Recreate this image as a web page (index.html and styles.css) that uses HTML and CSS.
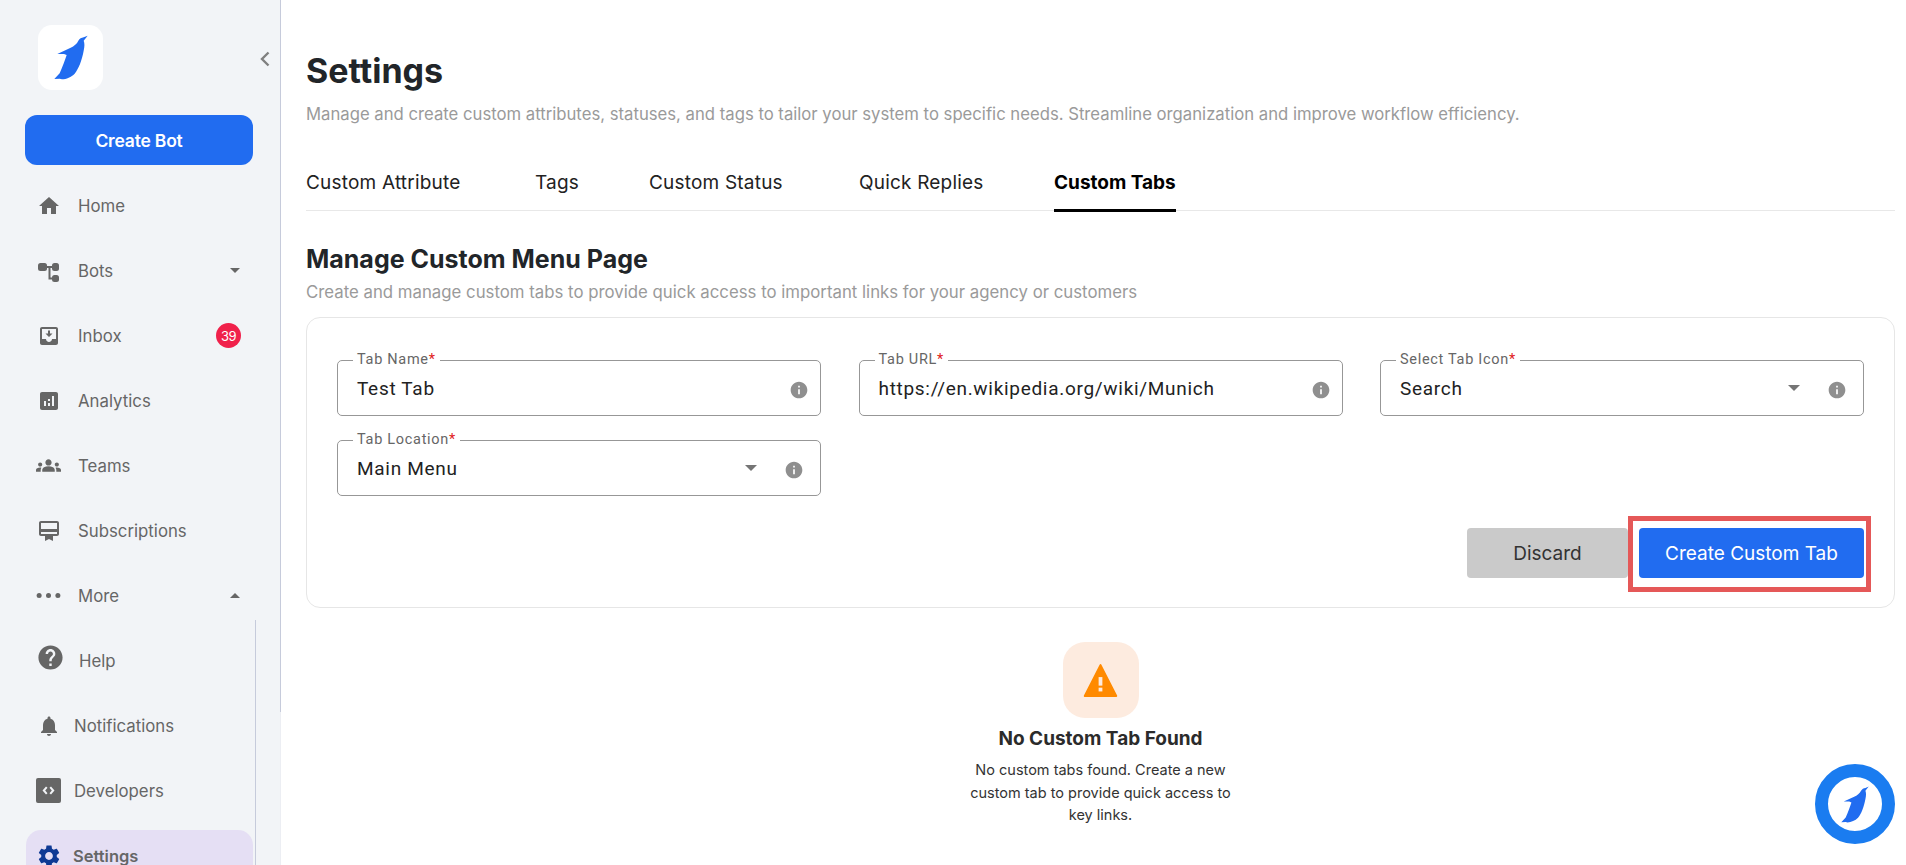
FILE: index.html
```html
<!DOCTYPE html>
<html lang="en">
<head>
    <meta charset="UTF-8">
    <meta name="viewport" content="width=device-width, initial-scale=1.0">
    <title>Settings</title>
    <link rel="stylesheet" href="styles.css">
</head>
<body>
    <svg class="defs" width="0" height="0">
        <symbol id="penguin" viewBox="100 75 102 135">
            <path d="M201 77 L189 82 C182 83 177 86 173 92 C169 101 160 108 150 113 L110 132 L130 132 L138 135 C133 150 126 170 117 190 L101 207 L117 206 L124 208 C137 208 152 201 162 191 C174 176 184 150 189 122 C192 108 192 100 189 92 Z"/>
        </symbol>
        <symbol id="info" viewBox="0 0 24 24">
            <path d="M12 2C6.48 2 2 6.48 2 12s4.48 10 10 10 10-4.48 10-10S17.52 2 12 2zm1 15h-2v-6h2v6zm0-8h-2V7h2v2z"/>
        </symbol>
    </svg>

    <div class="app">
        <aside class="sidebar">
            <div class="logo-row">
                <div class="logo"><svg class="logo-bird"><use href="#penguin"/></svg></div>
                <svg class="collapse" viewBox="0 0 12 18"><path d="M9.5 2.5 3 9l6.5 6.5"/></svg>
            </div>
            <button class="create-bot">Create Bot</button>
            <nav class="nav">
                <a class="nav-item">
                    <svg class="nav-icon" viewBox="0 0 24 24"><path d="M10 20v-6h4v6h5v-8h3L12 3 2 12h3v8z"/></svg>
                    <span class="nav-label">Home</span>
                </a>
                <a class="nav-item">
                    <svg class="nav-icon" viewBox="0 0 24 24"><rect x="1" y="4" width="9" height="8" rx="2.5"/><rect x="15" y="4" width="7" height="8" rx="2.5"/><rect x="15" y="16" width="7" height="7" rx="2.5"/><path d="M9 7h7v2h-2.500v9.500H16v2h-4.500V9H9z"/></svg>
                    <span class="nav-label">Bots</span>
                    <span class="caret"></span>
                </a>
                <a class="nav-item">
                    <svg class="nav-icon" viewBox="0 0 24 24"><path d="M19 3H5c-1.100 0-2 .9-2 2v14c0 1.100.9 2 2 2h14c1.100 0 2-.9 2-2V5c0-1.100-.9-2-2-2zm0 12h-4c0 1.660-1.350 3-3 3s-3-1.340-3-3H5V5h14v10z"/><path d="M15.500 9.500H13v-3h-2v3H8.500l3.500 3.500z"/></svg>
                    <span class="nav-label">Inbox</span>
                    <span class="badge">39</span>
                </a>
                <a class="nav-item">
                    <svg class="nav-icon" viewBox="0 0 24 24"><path d="M19 3H5c-1.100 0-2 .9-2 2v14c0 1.100.9 2 2 2h14c1.100 0 2-.9 2-2V5c0-1.100-.9-2-2-2zM9 17H7v-5h2v5zm4 0h-2v-3h2v3zm0-5h-2v-2h2v2zm4 5h-2V7h2v10z"/></svg>
                    <span class="nav-label">Analytics</span>
                </a>
                <a class="nav-item">
                    <svg class="nav-icon nav-icon-wide" viewBox="0 0 24 24"><path d="M12 12.750c1.630 0 3.070.39 4.240.9 1.080.48 1.760 1.560 1.760 2.730V18H6v-1.610c0-1.180.68-2.260 1.760-2.730 1.170-.52 2.610-.91 4.240-.91zM4 13c1.100 0 2-.9 2-2s-.9-2-2-2-2 .9-2 2 .9 2 2 2zm1.130 1.100c-.37-.06-.74-.1-1.130-.1-.99 0-1.930.21-2.780.58C.48 14.900 0 15.620 0 16.430V18h4.500v-1.610c0-.83.23-1.610.63-2.290zM20 13c1.100 0 2-.9 2-2s-.9-2-2-2-2 .9-2 2 .9 2 2 2zm4 3.430c0-.81-.48-1.530-1.220-1.850-.85-.37-1.790-.58-2.780-.58-.39 0-.76.04-1.130.1.4.68.63 1.460.63 2.290V18H24v-1.570zM12 6c1.660 0 3 1.340 3 3s-1.340 3-3 3-3-1.340-3-3 1.340-3 3-3z"/></svg>
                    <span class="nav-label">Teams</span>
                </a>
                <a class="nav-item">
                    <svg class="nav-icon" viewBox="0 0 24 24"><path d="M20 2H4C2.890 2 2 2.890 2 4v11c0 1.110.89 2 2 2h4v5l4-2 4 2v-5h4c1.110 0 2-.89 2-2V4c0-1.110-.89-2-2-2zm0 13H4v-2h16v2zm0-5H4V4h16v6z"/></svg>
                    <span class="nav-label">Subscriptions</span>
                </a>
                <a class="nav-item">
                    <svg class="nav-icon nav-icon-wide" viewBox="0 0 24 24"><circle cx="3" cy="12" r="2.400"/><circle cx="12" cy="12" r="2.400"/><circle cx="21" cy="12" r="2.400"/></svg>
                    <span class="nav-label">More</span>
                    <span class="caret caret-up"></span>
                </a>
                <div class="subnav">
                    <a class="nav-item">
                        <svg class="nav-icon nav-icon-help" viewBox="0 0 24 24"><path d="M12 2C6.480 2 2 6.480 2 12s4.480 10 10 10 10-4.480 10-10S17.520 2 12 2zm1 17h-2v-2h2v2zm2.070-7.750l-.9.92C13.450 12.900 13 13.500 13 15h-2v-.5c0-1.100.45-2.100 1.170-2.830l1.240-1.260c.37-.36.59-.86.59-1.410 0-1.100-.9-2-2-2s-2 .9-2 2H8c0-2.210 1.790-4 4-4s4 1.790 4 4c0 .88-.36 1.680-.93 2.250z"/></svg>
                        <span class="nav-label nav-label-help">Help</span>
                    </a>
                    <a class="nav-item nav-item-tight">
                        <svg class="nav-icon" viewBox="0 0 24 24"><path d="M12 22c1.100 0 2-.9 2-2h-4c0 1.100.89 2 2 2zm6-6v-5c0-3.070-1.640-5.640-4.500-6.320V4c0-.83-.67-1.500-1.500-1.500s-1.500.67-1.500 1.500v.68C7.630 5.360 6 7.920 6 11v5l-2 2v1h16v-1l-2-2z"/></svg>
                        <span class="nav-label">Notifications</span>
                    </a>
                    <a class="nav-item nav-item-tight">
                        <svg class="nav-icon nav-icon-wide" viewBox="0 0 25 25"><path fill-rule="evenodd" d="M2 0h21a2 2 0 0 1 2 2v21a2 2 0 0 1-2 2H2a2 2 0 0 1-2-2V2a2 2 0 0 1 2-2zm8 8.500L6.500 12.500l3.500 4 1.500-1.300-2.300-2.700 2.300-2.700zm5 0-1.500 1.300 2.300 2.700-2.300 2.700 1.500 1.300 3.500-4z"/></svg>
                        <span class="nav-label">Developers</span>
                    </a>
                    <a class="nav-item nav-item-tight nav-item-active">
                        <svg class="nav-icon" viewBox="0 0 24 24"><path d="M19.140 12.940c.04-.3.06-.61.06-.94 0-.32-.02-.64-.07-.94l2.030-1.580c.18-.14.23-.41.12-.61l-1.920-3.320c-.12-.22-.37-.29-.59-.22l-2.390.96c-.5-.38-1.030-.7-1.620-.94l-.36-2.540c-.04-.24-.24-.41-.48-.41h-3.840c-.24 0-.43.17-.47.41l-.36 2.540c-.59.24-1.130.57-1.620.94l-2.390-.96c-.22-.08-.47 0-.59.22L2.740 8.870c-.12.21-.08.47.12.61l2.030 1.580c-.05.3-.09.63-.09.94s.02.64.07.94l-2.030 1.580c-.18.14-.23.41-.12.61l1.920 3.320c.12.22.37.29.59.22l2.390-.96c.5.38 1.030.7 1.620.94l.36 2.540c.05.24.24.41.48.41h3.840c.24 0 .44-.17.47-.41l.36-2.540c.59-.24 1.130-.56 1.620-.94l2.390.96c.22.08.47 0 .59-.22l1.920-3.320c.12-.22.07-.47-.12-.61l-2.010-1.580zM12 15.600c-1.980 0-3.600-1.620-3.600-3.600s1.620-3.600 3.600-3.600 3.600 1.620 3.600 3.600-1.620 3.600-3.600 3.600z"/></svg>
                        <span class="nav-label">Settings</span>
                    </a>
                </div>
            </nav>
        </aside>

        <main class="main">
            <h1 class="page-title">Settings</h1>
            <p class="page-sub">Manage and create custom attributes, statuses, and tags to tailor your system to specific needs. Streamline organization and improve workflow efficiency.</p>

            <div class="tabs">
                <a class="tab tab-attr">Custom Attribute</a>
                <a class="tab tab-tags">Tags</a>
                <a class="tab tab-status">Custom Status</a>
                <a class="tab tab-replies">Quick Replies</a>
                <a class="tab tab-active">Custom Tabs</a>
            </div>

            <h2 class="section-title">Manage Custom Menu Page</h2>
            <p class="section-sub">Create and manage custom tabs to provide quick access to important links for your agency or customers</p>

            <section class="card">
                <div class="fields">
                    <fieldset class="field">
                        <legend class="field-label">Tab Name<span class="req">*</span></legend>
                        <span class="field-value">Test Tab</span>
                        <svg class="info"><use href="#info"/></svg>
                    </fieldset>
                    <fieldset class="field">
                        <legend class="field-label">Tab URL<span class="req">*</span></legend>
                        <span class="field-value">https://en.wikipedia.org/wiki/Munich</span>
                        <svg class="info"><use href="#info"/></svg>
                    </fieldset>
                    <fieldset class="field field-select">
                        <legend class="field-label">Select Tab Icon<span class="req">*</span></legend>
                        <span class="field-value">Search</span>
                        <span class="select-arrow"></span>
                        <svg class="info"><use href="#info"/></svg>
                    </fieldset>
                    <fieldset class="field field-select">
                        <legend class="field-label">Tab Location<span class="req">*</span></legend>
                        <span class="field-value">Main Menu</span>
                        <span class="select-arrow"></span>
                        <svg class="info"><use href="#info"/></svg>
                    </fieldset>
                </div>
                <div class="actions">
                    <button class="btn btn-discard">Discard</button>
                    <button class="btn btn-create">Create Custom Tab</button>
                    <span class="highlight"></span>
                </div>
            </section>

            <div class="empty">
                <div class="empty-icon">
                    <svg viewBox="0 0 24 24">
                        <path class="warn-shape" d="M2.800 21.100h18.400L12 3z"/>
                        <rect class="warn-mark" x="10.900" y="10" width="2.200" height="5"/>
                        <rect class="warn-mark" x="10.900" y="16.200" width="2.200" height="2.200"/>
                    </svg>
                </div>
                <h3 class="empty-title">No Custom Tab Found</h3>
                <p class="empty-text">No custom tabs found. Create a new custom tab to provide quick access to key links.</p>
            </div>
        </main>
    </div>

    <div class="chat-bubble"><svg class="chat-bird"><use href="#penguin"/></svg></div>
</body>
</html>
```

FILE: styles.css
```css
* {
    box-sizing: border-box;
}
html, body {
    margin: 0;
    height: 100%;
    overflow: hidden;
    background: white;
}
body {
    font-family: "Inter", "Liberation Sans", sans-serif;
    color: #212121;
}
.defs {
    position: absolute;
}
.app {
    display: flex;
    height: 865px;
    overflow: hidden;
}

/* sidebar */
.sidebar {
    width: 281px;
    flex-shrink: 0;
    height: 865px;
    overflow: hidden;
    background: #f2f4f7;
    border-right: 1px solid #c6cbdb;
    border-image: linear-gradient(#c6cbdb 711px, #eceef3 711px) 1;
    padding: 25px 27px 0 25px;
}
.logo-row {
    display: flex;
    align-items: center;
    justify-content: space-between;
    padding-left: 13px;
    margin-right: -18px;
}
.logo {
    width: 65px;
    height: 65px;
    background: white;
    border-radius: 14px;
    display: flex;
    align-items: center;
    justify-content: center;
}
.logo-bird {
    width: 34px;
    height: 45px;
    fill: #216cf0;
}
.collapse {
    width: 12px;
    height: 18px;
    margin-top: 3px;
    fill: none;
    stroke: #808080;
    stroke-width: 2.4;
}
.create-bot {
    display: block;
    width: 228px;
    height: 50px;
    margin-top: 25px;
    background: #216cf0;
    color: white;
    border: none;
    border-radius: 12px;
    font: 600 17.5px "Inter", sans-serif;
    letter-spacing: -0.2px;
}
.nav {
    margin-top: 8px;
}
.nav-item {
    display: flex;
    align-items: center;
    height: 65px;
    padding-left: 12px;
    color: #666;
    font-size: 16.8px;
}
.nav-icon {
    width: 24px;
    height: 24px;
    fill: #666;
    flex-shrink: 0;
}
.nav-label {
    margin-left: 17px;
}
.nav-icon-wide {
    width: 25px;
    height: 25px;
    margin-left: -1px;
}
.caret {
    margin-left: auto;
    margin-right: 13px;
    border-left: 5px solid transparent;
    border-right: 5px solid transparent;
    border-top: 5px solid #666;
}
.caret-up {
    border-top: none;
    border-bottom: 5px solid #666;
}
.badge {
    margin-left: auto;
    margin-right: 12px;
    width: 25px;
    height: 25px;
    border-radius: 50%;
    background: #f0214b;
    color: white;
    font-size: 13px;
    letter-spacing: -0.5px;
    display: flex;
    align-items: center;
    justify-content: center;
}
.subnav {
    width: 231px;
    border-right: 1px solid #c6cbdb;
    margin-top: -8px;
    padding-top: 8px;
}
.nav-icon-help {
    width: 29px;
    height: 29px;
    margin-left: -1px;
    margin-top: -7px;
}
.nav-label-help {
    margin-left: 14px;
}
.nav-item-tight .nav-label {
    margin-left: 13px;
}
.nav-item-active {
    background: #e5dff4;
    border-radius: 15px;
    width: 227px;
    margin: 6.5px 0 6.5px 1px;
    padding-left: 10px;
    height: 52px;
    font-size: 16.5px;
    font-weight: 600;
}
.nav-item-active .nav-label {
    margin-left: 11px;
}
.nav-item-active .nav-icon {
    width: 26px;
    height: 26px;
    fill: #0e3a94;
}

/* main column */
.main {
    flex: 1;
    padding: 0 11px 0 25px;
    min-width: 0;
}
.page-title {
    margin: 51px 0 0;
    font-size: 34px;
    line-height: 40px;
    font-weight: 700;
    color: #212529;
}
.page-sub {
    margin: 13px 0 0;
    font-size: 16.7px;
    line-height: 20px;
    color: #9a9a9a;
}
.tabs {
    display: flex;
    margin-top: 40px;
    height: 47px;
    border-bottom: 1px solid #e8e8e8;
}
.tab {
    font-size: 19px;
    line-height: 37px;
    letter-spacing: 0.2px;
    color: #222;
}
.tab-attr { width: 229px; }
.tab-tags { width: 114px; }
.tab-status { width: 210px; }
.tab-replies { width: 195px; }
.tab-active {
    font-weight: 700;
    letter-spacing: 0;
    color: black;
    height: 48px;
    border-bottom: 3px solid black;
}
.section-title {
    margin: 32px 0 0;
    font-size: 25px;
    line-height: 32px;
    font-weight: 700;
    color: #212529;
}
.section-sub {
    margin: 7px 0 0;
    font-size: 16.8px;
    line-height: 20px;
    color: #9a9a9a;
}
.card {
    margin-top: 15px;
    height: 291px;
    border: 1px solid #e6e6e6;
    border-radius: 14px;
    padding: 36px 30px 0 30px;
}

/* outlined fields */
.fields {
    display: grid;
    grid-template-columns: repeat(3, 484px);
    column-gap: 37.5px;
    row-gap: 18px;
}
.field {
    display: flex;
    align-items: center;
    margin: 0;
    min-width: 0;
    height: 62px;
    padding: 0 0 5px 19px;
    border: 1px solid #979797;
    border-radius: 5px;
    font-family: "Roboto", "Liberation Sans", sans-serif;
}
.field-label {
    margin-left: -4px;
    padding: 0 4px;
    font-size: 14.5px;
    line-height: 12px;
    letter-spacing: 0.7px;
    color: #666;
}
.req {
    color: #e02020;
}
.field-value {
    flex: 1;
    font-size: 19px;
    letter-spacing: 0.7px;
    color: #222;
}
.info {
    width: 20px;
    height: 20px;
    fill: #8f8f8f;
    margin-right: 11px;
    margin-top: 4px;
}
.field-select .info {
    margin-right: 16px;
}
.select-arrow {
    border-left: 6.5px solid transparent;
    border-right: 6.5px solid transparent;
    border-top: 6.5px solid #757575;
    margin-right: 27px;
}

/* buttons */
.actions {
    display: flex;
    justify-content: flex-end;
    position: relative;
    margin-top: 32px;
}
.btn {
    height: 50px;
    border: none;
    border-radius: 4px;
    font: 400 19px "Inter", sans-serif;
}
.btn-discard {
    width: 161px;
    margin-right: 11px;
    background: #cacaca;
    color: #333;
}
.btn-create {
    width: 225px;
    background: #216cf0;
    color: white;
}
.highlight {
    position: absolute;
    right: -7px;
    top: -12px;
    width: 243px;
    height: 76px;
    border: 5px solid #e55858;
}

/* empty state */
.empty {
    display: flex;
    flex-direction: column;
    align-items: center;
    margin-top: 34px;
}
.empty-icon {
    width: 76px;
    height: 76px;
    border-radius: 22px;
    background: #fdebdf;
    display: flex;
    align-items: center;
    justify-content: center;
}
.empty-icon svg {
    width: 41px;
    height: 41px;
}
.warn-shape {
    fill: #ff8a00;
    stroke: #ff8a00;
    stroke-width: 1.2;
    stroke-linejoin: round;
}
.warn-mark {
    fill: #fdebdf;
}
.empty-title {
    margin: 9px 0 0;
    font-size: 19px;
    line-height: 24px;
    font-weight: 700;
    color: #2b2b2b;
}
.empty-text {
    margin: 8px 0 0;
    width: 270px;
    text-align: center;
    font-size: 14.5px;
    line-height: 22.5px;
    color: #333;
}

/* floating chat button */
.chat-bubble {
    position: fixed;
    left: 1815px;
    top: 764px;
    width: 80px;
    height: 80px;
    border: 13px solid #1a7cf0;
    border-radius: 50%;
    background: white;
    display: flex;
    align-items: center;
    justify-content: center;
}
.chat-bird {
    width: 28px;
    height: 37px;
    fill: #216cf0;
}
```
